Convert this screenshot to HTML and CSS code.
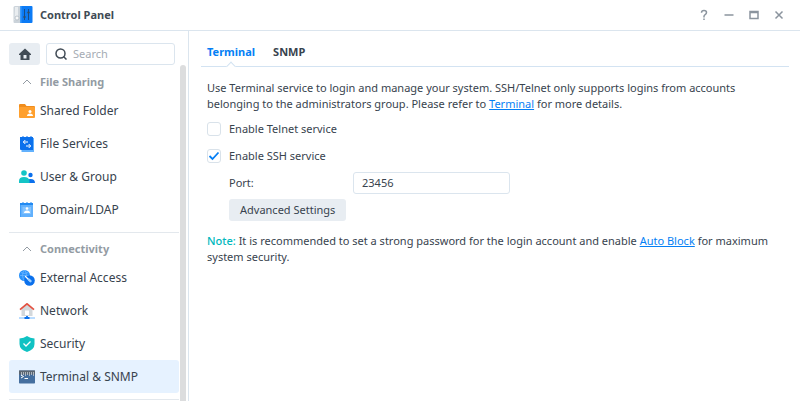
FILE: index.html
```html
<!DOCTYPE html>
<html lang="en">
<head>
<meta charset="utf-8">
<title>Control Panel</title>
<link rel="stylesheet" href="styles.css">
</head>
<body>
<header class="titlebar">
  <svg class="app-icon" viewBox="0 0 20 20" aria-hidden="true">
    <path d="M2 1h6v17H1.500q-1 0-1-1V2.500q0-1.500 1.500-1.500z" fill="#cbd3da"/>
    <path d="M2 2h3v13H1.500z" fill="#e9edf0"/>
    <circle cx="4" cy="13" r="2" fill="#f7f8f9" stroke="#a9b3bc" stroke-width=".7"/>
    <rect x="7" y="1" width="12.500" height="17" rx="1" fill="#0c7bf5"/>
    <path d="M7 1h1.500v17H7z" fill="#3b9bfd"/>
    <path d="M11.500 4v11M15.500 4v11" stroke="#174d89" stroke-width="1"/>
    <path d="M10.300 12h2.400M14.300 7.500h2.400" stroke="#394d60" stroke-width="1.600"/>
  </svg>
  <h1 class="title">Control Panel</h1>
  <div class="window-controls">
    <button class="window-button" aria-label="Help"><svg viewBox="0 0 12 12"><path d="M3.500 3.700q0-2.200 2.500-2.200t2.500 2.100q0 1.200-1.300 2T6 7.500v1M6 9.500v1.500"/></svg></button>
    <button class="window-button" aria-label="Minimize"><svg viewBox="0 0 12 12"><path d="M1.500 6h9"/></svg></button>
    <button class="window-button" aria-label="Maximize"><svg viewBox="0 0 12 12"><path d="M2 2.500h8v7H2zM2 3.500h8"/></svg></button>
    <button class="window-button" aria-label="Close"><svg viewBox="0 0 12 12"><path d="M2.500 2.500l7 7M9.500 2.500l-7 7"/></svg></button>
  </div>
</header>
<div class="body">
  <aside class="sidebar">
    <div class="tools">
      <button class="home" aria-label="Home"><svg viewBox="0 0 12 12"><path d="M6 .5L12 6v1h-1.500v5h-9V7H0V6zM4.500 7v3.500h3V7z" fill="#414b55" fill-rule="evenodd"/></svg></button>
      <label class="search">
        <svg viewBox="0 0 12 12" aria-hidden="true"><circle cx="5.500" cy="5.500" r="4.500"/><path d="M8.500 8.500l3 3"/></svg>
        <input class="search-input" type="search" placeholder="Search" aria-label="Search">
      </label>
    </div>
    <div class="scroll-area">
      <nav class="nav">
        <section class="group">
          <button class="group-title"><svg viewBox="0 0 16 16" aria-hidden="true"><path d="M4 10l4-4 4 4"/></svg>File Sharing</button>
          <a class="item" href="#shared"><svg viewBox="0 0 16 16" aria-hidden="true"><path d="M0 2q0-1 1-1h5l1.500 2H15q1 0 1 1v10H0z" fill="#f08d1d"/><rect y="4" width="16" height="11" rx="1" fill="#ffa02e"/><circle cx="11" cy="8.500" r="1.500" fill="#fff"/><path d="M8 13q0-2.500 3-2.500t3 2.500z" fill="#fff"/></svg>Shared Folder</a>
          <a class="item" href="#files"><svg viewBox="0 0 16 16" aria-hidden="true"><rect x="2.500" y="2" width="12.500" height="14" fill="#62b1fd"/><path d="M1 1h2v-.6h2V1h2v-.6h2V1h2v-.6h2V1h1v13H2q-1 0-1-1z" fill="#0b70ec"/><path d="M9 6H4.500M6.300 4L4.300 6l2 2M7 10h4.500M9.700 8l2 2-2 2" fill="none" stroke="#fff"/></svg>File Services</a>
          <a class="item" href="#users"><svg viewBox="0 0 16 16" aria-hidden="true"><circle cx="11.500" cy="6" r="2.200" fill="#0b70ec"/><path d="M7 14q0-4 4.500-4t4.500 4z" fill="#0b70ec"/><circle cx="5" cy="4" r="2.800" fill="#14c4c6"/><path d="M0 14v-2q0-4 5-4t5.500 4v2z" fill="#14c4c6"/></svg>User &amp; Group</a>
          <a class="item" href="#domain"><svg viewBox="0 0 16 16" aria-hidden="true"><path d="M1 1h2v-.6h2V1h2v-.6h2V1h2v-.6h2V1h1v14H1z" fill="#228af2"/><rect x="1.500" y="3" width="12.500" height="12" fill="#62b1fd"/><rect x="3.500" y="5" width="8.500" height="7" fill="#83c3ff"/><circle cx="8" cy="6.500" r="1.300" fill="#fff"/><path d="M5 11q0-2.500 3-2.500t3 2.500z" fill="#fff"/></svg>Domain/LDAP</a>
        </section>
        <section class="group">
          <button class="group-title"><svg viewBox="0 0 16 16" aria-hidden="true"><path d="M4 10l4-4 4 4"/></svg>Connectivity</button>
          <a class="item" href="#external"><svg viewBox="0 0 16 16" aria-hidden="true"><circle cx="5.500" cy="5.500" r="5.500" fill="#2992fa"/><path d="M1 5.500h9M5.500 0q-4 5 0 11 4-6 0-11M2 2.500q3.500 2 7 0" fill="none" stroke="#74b9ff" stroke-width=".7"/><circle cx="10.500" cy="10.500" r="5.300" fill="#0b70ec"/><path d="M6.500 6.500l4 4" stroke="#fff" stroke-width="1.200" stroke-linecap="round"/><path d="M9.800 9.500l1.700 1.700" stroke="#9dd0ff" stroke-width="2.400" stroke-linecap="round"/></svg>External Access</a>
          <a class="item" href="#network"><svg viewBox="0 0 16 16" aria-hidden="true"><path d="M2.500 6L8 1.500 13.500 6v7h-11z" fill="#d3d8dc"/><path d="M6 7.500h4V12H6z" fill="#fff"/><path d="M1 6.700L8 .8l7 5.900" fill="none" stroke="#e35343" stroke-width="1.700"/><path d="M0 15h16" stroke="#74b9ff"/><path d="M8 13v2M5.500 15h5" stroke="#0b70ec" stroke-width="1.800"/></svg>Network</a>
          <a class="item" href="#security"><svg viewBox="0 0 16 16" aria-hidden="true"><path d="M8 0q3 2 7.500 2.500V8q0 5.500-7.500 8Q.5 13.500.5 8V2.500Q5 2 8 0z" fill="#10c2c3"/><path d="M4.500 7.500L7 10l4.500-4.500" fill="none" stroke="#fff" stroke-width="1.300"/></svg>Security</a>
          <a class="item selected" href="#terminal" aria-current="page"><svg viewBox="0 0 16 16" aria-hidden="true"><rect y="1.500" width="16" height="13" rx=".7" fill="#456f9f"/><path d="M0 1.500h16v4H0z" fill="#5b6570"/><path d="M2.500 3v4M4.500 3v3M6.500 3v4M8.500 3v3M10.500 3v4M12.500 3v3M14.500 3v4" stroke="#b5bec7" stroke-width=".9"/><path d="M2 6l2.500 1.500L2 9M5.500 9.500H9" fill="none" stroke="#fff"/></svg>Terminal &amp; SNMP</a>
        </section>
        <section class="group"></section>
      </nav>
      <div class="scrollbar" aria-hidden="true"></div>
    </div>
  </aside>
  <main class="main">
    <div class="tabs" role="tablist">
      <button class="tab active" role="tab" aria-selected="true">Terminal</button>
      <button class="tab" role="tab" aria-selected="false">SNMP</button>
    </div>
    <form class="panel">
      <p class="text">Use Terminal service to login and manage your system. SSH/Telnet only supports logins from accounts belonging to the administrators group. Please refer to <a class="link" href="#help">Terminal</a> for more details.</p>
      <div class="fields">
        <label class="row"><input class="check" type="checkbox">Enable Telnet service</label>
        <label class="row"><input class="check" type="checkbox" checked>Enable SSH service</label>
        <div class="row nested"><label class="field-label" for="port">Port:</label><input class="field" id="port" type="text" value="23456"></div>
        <div class="row nested"><button class="button" type="button">Advanced Settings</button></div>
      </div>
      <p class="text"><span class="note">Note:</span> It is recommended to set a strong password for the login account and enable <a class="link" href="#block">Auto Block</a> for maximum system security.</p>
    </form>
  </main>
</div>
</body>
</html>
```
FILE: styles.css
```css
* {
  box-sizing: border-box;
}

body {
  display: flex;
  flex-direction: column;
  height: 100vh;
  margin: 0;
  overflow: hidden;
  background: #fff;
  color: #38434e;
  font: 11px/16px "Noto Sans", sans-serif;
}

button,
input {
  margin: 0;
  border: 0;
  background: none;
  color: inherit;
  font: inherit;
}

.titlebar {
  display: flex;
  flex: none;
  align-items: center;
  gap: 7px;
  padding: 5px 15px 5px 13px;
  border-bottom: 1px solid #dbe5ee;
}

.app-icon {
  width: 20px;
  height: 20px;
}

.title {
  flex: 1;
  margin: 0;
  color: #414b55;
  font-size: 11px;
}

.window-controls {
  display: flex;
  gap: 13px;
}

.window-button {
  width: 12px;
  height: 12px;
  padding: 0;
}

.window-button svg {
  display: block;
  fill: none;
  stroke: #8b949e;
  stroke-width: 1.5;
}

.body {
  display: flex;
  flex: 1;
  min-height: 0;
}

.sidebar {
  display: flex;
  flex: none;
  flex-direction: column;
  width: 189px;
  padding-top: 12px;
  border-right: 1px solid #dbe5ee;
}

.tools {
  display: flex;
  flex: none;
  gap: 6px;
  height: 22px;
  padding: 0 13px 0 9px;
}

.home {
  display: flex;
  flex: none;
  align-items: center;
  justify-content: center;
  width: 31px;
  border-radius: 3px;
  background: #e8edf2;
}

.home svg {
  width: 12px;
  height: 12px;
}

.search {
  display: flex;
  flex: 1;
  align-items: center;
  gap: 6px;
  min-width: 0;
  padding: 0 8px;
  border: 1px solid #dbe5ee;
  border-radius: 3px;
}

.search svg {
  flex: none;
  width: 12px;
  height: 12px;
  fill: none;
  stroke: #414b55;
  stroke-width: 1.5;
}

.search-input {
  width: 100%;
  min-width: 0;
  padding: 0;
  outline: 0;
}

.search-input::placeholder {
  color: #a5acb4;
}

.scroll-area {
  display: flex;
  flex: 1;
  min-height: 0;
}

.nav {
  flex: 1;
  padding: 5px 1px 0 9px;
  overflow: hidden;
}

.group + .group {
  margin-top: 6px;
  padding-top: 4px;
  border-top: 1px solid #e3e8ed;
}

.group-title {
  display: flex;
  align-items: center;
  gap: 5px;
  width: 100%;
  height: 24px;
  padding: 0 10px;
  color: #939ba3;
  font-weight: bold;
}

.group-title svg {
  width: 16px;
  height: 16px;
  fill: none;
  stroke: #939ba3;
}

.item {
  display: flex;
  align-items: center;
  gap: 5px;
  height: 33px;
  padding: 0 10px;
  border-radius: 3px;
  color: inherit;
  font-size: 12px;
  text-decoration: none;
}

.item svg {
  flex: none;
  width: 16px;
  height: 16px;
}

.selected {
  background: #e6f2ff;
}

.scrollbar {
  width: 6px;
  margin-right: 2px;
  border-radius: 3px 3px 0 0;
  background: #dcddde;
}

.main {
  flex: 1;
  min-width: 0;
  padding: 11px 11px 0 12px;
}

.tabs {
  display: flex;
  gap: 18px;
  height: 25px;
  padding: 0 6px;
  border-bottom: 1px solid #d3e3f2;
}

.tab {
  position: relative;
  padding: 0 0 4px;
  font-weight: bold;
}

.active {
  color: #057ff5;
}

.active::after {
  position: absolute;
  bottom: -4px;
  left: 50%;
  width: 6px;
  height: 6px;
  border: solid #d3e3f2;
  border-width: 1px 0 0 1px;
  background: #fff;
  content: "";
  transform: translateX(-50%) rotate(45deg);
}

.panel {
  padding: 13px 6px;
}

.text {
  margin: 0;
}

.link {
  color: #057ff5;
}

.note {
  color: #00b8bd;
  font-weight: 500;
}

.fields {
  padding: 3px 0 10px;
}

.row {
  display: flex;
  align-items: center;
  gap: 8px;
  height: 27px;
}

.nested {
  gap: 0;
  padding-left: 22px;
}

.check {
  width: 14px;
  height: 14px;
  border: 1px solid #d9e2ea;
  border-radius: 3px;
  appearance: none;
}

.check:checked {
  background: url("data:image/svg+xml,%3Csvg xmlns='http://www.w3.org/2000/svg' viewBox='0 0 12 12'%3E%3Cpath d='M1.500 6l3 3 6-6.500' fill='none' stroke='%23057ff5' stroke-width='1.800'/%3E%3C/svg%3E") center / 12px 12px no-repeat;
}

.field-label {
  width: 124px;
}

.field {
  width: 157px;
  height: 22px;
  padding: 0 8px;
  border: 1px solid #dbe5ee;
  border-radius: 3px;
}

.button {
  height: 22px;
  padding: 0 11px;
  border-radius: 3px;
  background: #e8edf2;
}
```
